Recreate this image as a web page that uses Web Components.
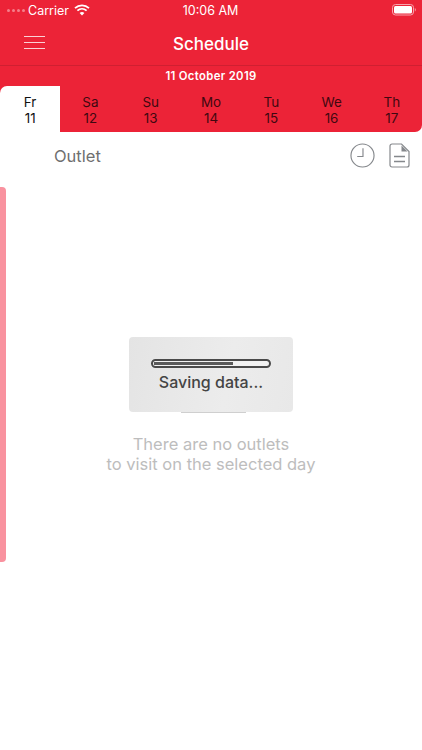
<!DOCTYPE html>
<html><head><meta charset="utf-8"><title>Schedule</title>
<style>
html,body{margin:0;padding:0;background:#fff}
body{width:422px;height:750px;overflow:hidden;font-family:Inter,"Liberation Sans",sans-serif}
</style></head><body>
<schedule-app>
  <status-bar></status-bar>
  <nav-bar title="Schedule"></nav-bar>
  <day-strip date="11 October 2019">
    <day-tab day="Fr" num="11" active></day-tab>
    <day-tab day="Sa" num="12"></day-tab>
    <day-tab day="Su" num="13"></day-tab>
    <day-tab day="Mo" num="14"></day-tab>
    <day-tab day="Tu" num="15"></day-tab>
    <day-tab day="We" num="16"></day-tab>
    <day-tab day="Th" num="17"></day-tab>
  </day-strip>
  <outlet-head></outlet-head>
  <outlet-body></outlet-body>
</schedule-app>
<script>
function def(name,html){
  customElements.define(name,class extends HTMLElement{
    connectedCallback(){
      if(this.shadowRoot)return;
      const r=this.attachShadow({mode:'open'});
      r.innerHTML=typeof html==='function'?html(this):html;
    }
  });
}
def('schedule-app',`<style>:host{display:flex;flex-direction:column;width:422px;height:750px;background:#fff;position:relative}</style><slot></slot>`);
def('status-bar',`<style>
:host{display:flex;align-items:center;height:20px;background:#ec2337;color:#fff;font-size:12.5px;flex:none}
.l{display:flex;align-items:center;padding-left:7px;flex:1}
.dots{display:flex;gap:2px;margin-right:3px}
.dots i{width:3px;height:3px;border-radius:50%;background:#f57f8b}
.c{flex:none;position:relative;left:-1px}
.r{flex:1;display:flex;justify-content:flex-end;padding-right:6px}
svg{display:block}
</style>
<div class="l"><div class="dots"><i></i><i></i><i></i><i></i></div><span>Carrier</span>
<svg width="16" height="12" viewBox="0 0 16 12" style="margin-left:5px"><path d="M1 4.2C5 .4 11 .4 15 4.2" fill="none" stroke="#fff" stroke-width="1.8"/><path d="M3.4 6.7c2.7-2.4 6.5-2.4 9.2 0" fill="none" stroke="#fff" stroke-width="1.8"/><path d="M5.6 8.9c1.4-1.2 3.4-1.2 4.8 0L8 11.4z" fill="#fff"/></svg></div>
<div class="c">10:06 AM</div>
<div class="r"><svg width="24" height="12" viewBox="0 0 24 12"><rect x=".5" y=".5" width="21" height="10.5" rx="3" fill="none" stroke="#f8a3ac"/><rect x="2" y="2" width="18" height="7.500" rx="1.5" fill="#fff"/><path d="M22.800 4v3.500c.6-.2 1-1 1-1.750s-.4-1.550-1-1.750z" fill="#f8a3ac"/></svg></div>`);
def('nav-bar',e=>`<style>
:host{display:grid;grid-template-columns:1fr auto 1fr;align-items:center;height:45px;background:#ec2337;color:#fff;border-bottom:1px solid #cf1f31;flex:none}
.b{padding-left:24px;display:flex;flex-direction:column;gap:4.600px}
.b i{display:block;width:21px;height:1.200px;background:#fbd0d5}
.t{font-size:17px;font-weight:500;position:relative;top:1px}
</style><div class="b"><i></i><i></i><i></i></div><div class="t">${e.getAttribute('title')}</div><div></div>`);
def('day-strip',e=>`<style>
:host{display:block;background:#ec2337;border-radius:0 0 7px 0;flex:none}
.d{height:20px;display:flex;align-items:center;justify-content:center;color:#fff;font-size:11.300px;font-weight:600;letter-spacing:.35px}
.w{display:grid;grid-template-columns:repeat(7,1fr);height:46px}
</style><div class="d">${e.getAttribute('date')}</div><div class="w"><slot></slot></div>`);
def('day-tab',e=>`<style>
:host{display:flex;flex-direction:column;align-items:center;padding-top:8px;box-sizing:border-box;color:#3f0810;font-size:13.400px;line-height:16px}
:host([active]){background:#fff;color:#111;border-radius:7px 0 0 0}
</style><span>${e.getAttribute('day')}</span><span>${e.getAttribute('num')}</span>`);
def('outlet-head',`<style>
:host{display:flex;align-items:center;height:48px;padding:0 12px 0 54px;color:#6f6f6f;font-size:16.500px;flex:none}
span{flex:1}
.i{display:flex;align-items:center;gap:14px;position:relative;top:-1px}
svg{display:block}
</style><span>Outlet</span><div class="i">
<svg width="25" height="25" viewBox="0 0 26 26" fill="none" stroke="#85888c" stroke-width="1.200"><circle cx="13" cy="13" r="12"/><path d="M13.500 5.500V14H7.500"/></svg>
<svg width="21" height="25" viewBox="0 0 21 25" fill="none" stroke="#85888c" stroke-width="1.200"><path d="M3 1h9.500L20 8.500V22a2 2 0 0 1-2 2H3a2 2 0 0 1-2-2V3a2 2 0 0 1 2-2z"/><path d="M12.500 2.500V8.500H18.500z" fill="#85888c" stroke="none"/><path d="M5 13.500h11M5 18.500h11" stroke-width="1.500"/></svg>
</div>`);
def('outlet-body',`<style>
:host{display:flex;flex:1;position:relative;padding-top:7px;min-height:0}
.rail{width:6px;height:375px;background:#f9929f;border-radius:0 4px 4px 0;flex:none}
.m{position:absolute;left:0;right:0;top:254px;text-align:center;color:#bdbdbd;font-size:16.500px;line-height:20px}
.hud{position:absolute;left:129px;top:157px;width:164px;height:75px;box-sizing:border-box;background:linear-gradient(100deg,#e4e4e4,#ececec 60%,#e8e8e8);border-radius:4px;display:flex;flex-direction:column;align-items:center;padding-top:22px;color:#444;font-size:16px;font-weight:500}
.hud::after{content:"";position:absolute;left:52px;bottom:-1px;width:65px;height:1px;background:#cfcfcf}
.bar{width:120px;height:9px;box-sizing:border-box;border:2px solid #4a4a4a;border-radius:5px;background:#f2f2f2;padding:1px 1px;margin-bottom:4px}
.bar i{display:block;width:69%;height:3px;background:#5a5a5a}
</style><div class="rail"></div>
<div class="m">There are no outlets<br>to visit on the selected day</div>
<div class="hud"><div class="bar"><i></i></div><div>Saving data...</div></div>`);
</script>
</body></html>
